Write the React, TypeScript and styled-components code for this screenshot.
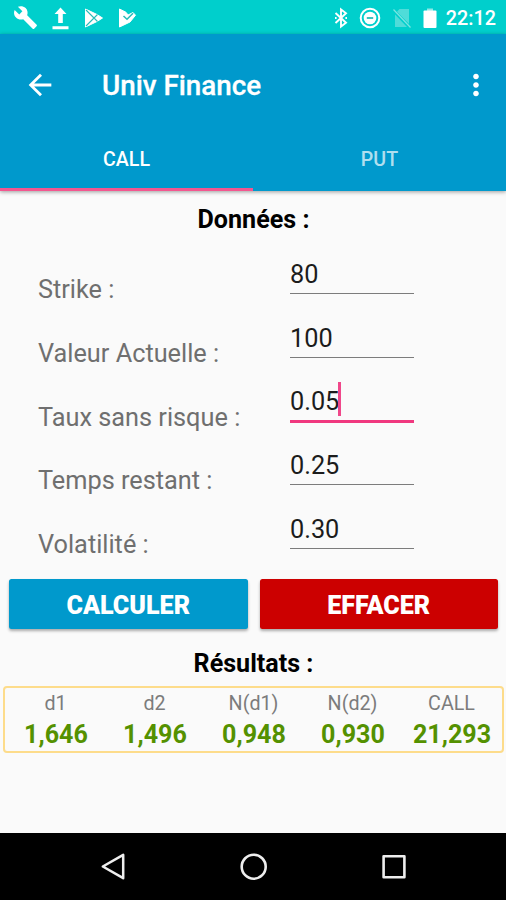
import React from 'react';
import styled, { createGlobalStyle } from 'styled-components';
import { MdArrowBack, MdMoreVert, MdBuild } from 'react-icons/md';

const GlobalStyle = createGlobalStyle`
  *, *::before, *::after { box-sizing: border-box; }
  body { margin: 0; font-family: Roboto, sans-serif; }
  svg { display: block; flex: none; }
`;

const Screen = styled.div`
  display: flex;
  flex-direction: column;
  width: 506px;
  height: 900px;
  overflow: hidden;
  background: #fafafa;
`;

const StatusBar = styled.div`
  display: flex;
  justify-content: space-between;
  align-items: center;
  height: 34px;
  padding: 1px 10px 0 13px;
  background: #00cfcc;
  color: #fff;
`;

const StatusGroup = styled.div<{ $gap: number }>`
  display: flex;
  align-items: center;
  gap: ${(p) => p.$gap}px;
`;

const Clock = styled.span`
  margin: 2px 0 0 -2px;
  font-size: 19.8px;
  font-weight: 500;
  line-height: 34px;
`;

const AppBar = styled.header`
  position: relative;
  display: flex;
  flex-direction: column;
  height: 157px;
  background: #0099cc;
  color: #fff;
  box-shadow: 0 1px 4px rgba(0, 0, 0, 0.38);
`;

const Toolbar = styled.div`
  display: flex;
  align-items: center;
  height: 93px;
  padding: 9px 13px 0 23px;
`;

const IconButton = styled.button`
  display: flex;
  padding: 0;
  border: 0;
  background: none;
  color: inherit;
`;

const Title = styled.h1`
  flex: 1;
  margin: 2px 0 0 45px;
  font-size: 27.8px;
  font-weight: 500;
  line-height: 40px;
  -webkit-text-stroke: 0.3px currentColor;
`;

const Tabs = styled.nav`
  display: grid;
  grid-template-columns: 1fr 1fr;
  height: 64px;
`;

const Tab = styled.button<{ $active?: boolean }>`
  padding: 3px 0 0;
  border: 0;
  border-bottom: 3px solid ${(p) => (p.$active ? '#f4568f' : 'transparent')};
  background: none;
  color: ${(p) => (p.$active ? '#fff' : 'rgba(255, 255, 255, 0.7)')};
  font: 500 19.6px Roboto, sans-serif;
`;

const Content = styled.main`
  display: flex;
  flex: 1;
  flex-direction: column;
`;

const SectionTitle = styled.h2<{ $results?: boolean }>`
  height: 41px;
  margin: ${(p) => (p.$results ? '14px 0 2px' : '8px 0 1px')};
  padding-left: 1px;
  color: #000;
  font-size: 25.1px;
  font-weight: 700;
  line-height: 41px;
  text-align: center;
`;

const Fields = styled.div`
  display: grid;
  grid-auto-rows: 63.8px;
`;

const Field = styled.label`
  display: grid;
  grid-template-columns: 252px 124px;
  align-items: start;
  padding-left: 38px;
`;

const FieldLabel = styled.span`
  padding-top: 29px;
  color: #6f6f6f;
  font-size: 25.3px;
  line-height: 40px;
  white-space: nowrap;
`;

const FieldValue = styled.span<{ $focused?: boolean }>`
  display: flex;
  align-items: center;
  height: ${(p) => (p.$focused ? 54 : 53)}px;
  padding: 15px 0 0;
  border-bottom: ${(p) => (p.$focused ? '3px solid #f0387f' : '1px solid #7c7c7c')};
  color: #1c1c1c;
  font-size: 25.3px;
  line-height: 37px;
`;

const Caret = styled.i`
  width: 3px;
  height: 34px;
  margin: -5px 0 0 -1px;
  background: #f0478a;
`;

const Actions = styled.div`
  display: grid;
  grid-template-columns: 1fr 1fr;
  gap: 12px;
  margin: 19px 8px 0 9px;
`;

const ActionButton = styled.button<{ $color: string }>`
  height: 50px;
  padding: 3px 0 0;
  border: 0;
  border-radius: 2.5px;
  background: ${(p) => p.$color};
  box-shadow: 0 2px 3px rgba(0, 0, 0, 0.32);
  color: #fff;
  font: 900 25.1px Roboto, sans-serif;
`;

const Results = styled.dl`
  display: grid;
  grid-template-columns: repeat(5, 99px);
  justify-content: center;
  height: 67px;
  margin: 0 2px 0 3px;
  border: 2px solid #fddc8b;
  border-radius: 4px;
  text-align: center;
`;

const ResultLabel = styled.dt`
  padding-top: 1px;
  color: #7c7c7c;
  font-size: 19.7px;
  line-height: 29px;
`;

const ResultValue = styled.dd`
  margin: 0;
  padding-left: 1px;
  color: #549100;
  font-size: 25.1px;
  font-weight: 700;
  line-height: 34px;
`;

const NavBar = styled.footer`
  display: flex;
  justify-content: space-between;
  align-items: center;
  height: 67px;
  padding: 0 97px 0 98px;
  background: #000;
`;

const UploadIcon = () => (
  <svg width="18" height="24" viewBox="0 0 18 24" fill="#fff">
    <path d="M8.5 1.5 14.5 8H10.8V17H6.2V8H2.5ZM0.5 20.2H16.5V23.2H0.5Z" />
  </svg>
);

const PlayIcon = () => (
  <svg width="20" height="22" viewBox="0 0 20 22">
    <path d="M1.5 2 13 7.5 18.5 11 13 14.5 1.5 20Z" fill="#fff" stroke="#fff" strokeLinejoin="round" />
    <path d="M2 3 13.5 14.5M2 19 13.5 7.5" stroke="#27bcb9" strokeWidth="1.1" />
  </svg>
);

const PlayCheckIcon = () => (
  <svg width="20" height="22" viewBox="0 0 20 22" fill="none">
    <path d="M1.5 2 8 5.3 10 8 15 5.5 17.5 8.2 12 15 1.5 20Z" fill="#fff" stroke="#fff" strokeLinejoin="round" />
    <path d="M5.5 9 9 12.3 15 6.2" stroke="#27bcb9" strokeWidth="1.5" />
  </svg>
);

const BluetoothIcon = () => (
  <svg width="14" height="22" viewBox="0 0 14 22" fill="none" stroke="#fff" strokeWidth="1.9">
    <path d="M1.5 6 12 15.7 7 19.5V2.5L12 6.3 1.5 16" />
    <path d="M1 11H2.6M11.4 11H13" />
  </svg>
);

const DoNotDisturbIcon = () => (
  <svg width="22" height="22" viewBox="0 0 22 22" fill="none" stroke="#fff">
    <circle cx="11" cy="11" r="9.3" strokeWidth="2" />
    <circle cx="11" cy="11" r="6.3" fill="#fff" stroke="none" />
    <path d="M7.8 11H14.2" stroke="#27bcb9" strokeWidth="1.8" />
  </svg>
);

const NoSimIcon = () => (
  <svg width="20" height="22" viewBox="0 0 20 22">
    <path d="M7.5 2H17V17L5 4.7ZM3 7.5 15 20H3Z" fill="#4fdcd9" />
    <path d="M1.5 2.5 18.5 20.5" stroke="#7be5e2" strokeWidth="1.2" />
  </svg>
);

const BatteryIcon = () => (
  <svg width="14" height="22" viewBox="0 0 14 22">
    <path d="M4 1.5H10V4H4Z" fill="#8fe9e7" />
    <rect x="0.5" y="3.5" width="13" height="17.5" rx="1" fill="#fff" />
  </svg>
);

const BackIcon = () => (
  <svg width="30" height="30" viewBox="0 0 30 30" fill="none" stroke="#eee" strokeWidth="2.5" strokeLinejoin="round">
    <path d="M25.2 2.8V26.2L4.8 14.5Z" />
  </svg>
);

const HomeIcon = () => (
  <svg width="30" height="30" viewBox="0 0 30 30" fill="none" stroke="#eee" strokeWidth="2.6">
    <circle cx="14.7" cy="14.7" r="12" />
  </svg>
);

const RecentsIcon = () => (
  <svg width="30" height="30" viewBox="0 0 30 30" fill="none" stroke="#eee" strokeWidth="2.6" strokeLinejoin="round">
    <path d="M4.6 4.3H25.4V25.3H4.6Z" />
  </svg>
);

const fields = [
  { label: 'Strike :', value: '80' },
  { label: 'Valeur Actuelle :', value: '100' },
  { label: 'Taux sans risque :', value: '0.05', focused: true },
  { label: 'Temps restant :', value: '0.25' },
  { label: 'Volatilité :', value: '0.30' },
];

const results = [
  { label: 'd1', value: '1,646' },
  { label: 'd2', value: '1,496' },
  { label: 'N(d1)', value: '0,948' },
  { label: 'N(d2)', value: '0,930' },
  { label: 'CALL', value: '21,293' },
];

export default function App() {
  return (
    <>
      <GlobalStyle />
      <Screen>
        <StatusBar>
          <StatusGroup $gap={14}>
            <MdBuild size={25} />
            <UploadIcon />
            <PlayIcon />
            <PlayCheckIcon />
          </StatusGroup>
          <StatusGroup $gap={11}>
            <BluetoothIcon />
            <DoNotDisturbIcon />
            <NoSimIcon />
            <BatteryIcon />
            <Clock>22:12</Clock>
          </StatusGroup>
        </StatusBar>
        <AppBar>
          <Toolbar>
            <IconButton aria-label="Retour"><MdArrowBack size={34} /></IconButton>
            <Title>Univ Finance</Title>
            <IconButton aria-label="Menu"><MdMoreVert size={34} /></IconButton>
          </Toolbar>
          <Tabs>
            <Tab $active>CALL</Tab>
            <Tab>PUT</Tab>
          </Tabs>
        </AppBar>
        <Content>
          <SectionTitle>Données :</SectionTitle>
          <Fields>
            {fields.map((f) => (
              <Field key={f.label}>
                <FieldLabel>{f.label}</FieldLabel>
                <FieldValue $focused={f.focused}>
                  {f.value}
                  {f.focused && <Caret />}
                </FieldValue>
              </Field>
            ))}
          </Fields>
          <Actions>
            <ActionButton $color="#0099cc">CALCULER</ActionButton>
            <ActionButton $color="#cc0000">EFFACER</ActionButton>
          </Actions>
          <SectionTitle $results>Résultats :</SectionTitle>
          <Results>
            {results.map((r) => (
              <div key={r.label}>
                <ResultLabel>{r.label}</ResultLabel>
                <ResultValue>{r.value}</ResultValue>
              </div>
            ))}
          </Results>
        </Content>
        <NavBar>
          <BackIcon />
          <HomeIcon />
          <RecentsIcon />
        </NavBar>
      </Screen>
    </>
  );
}
